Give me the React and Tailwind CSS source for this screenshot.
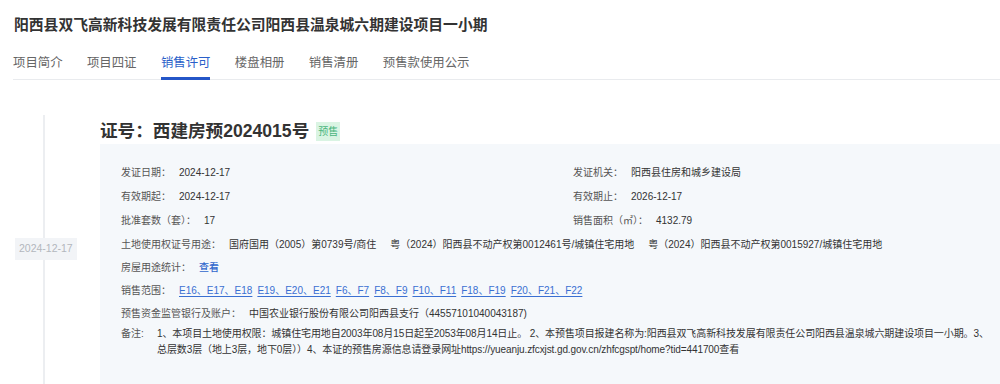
import React from "react";

const tabs = ["项目简介", "项目四证", "销售许可", "楼盘相册", "销售清册", "预售款使用公示"];
const links = ["E16、E17、E18", "E19、E20、E21", "F6、F7", "F8、F9", "F10、F11", "F18、F19", "F20、F21、F22"];

function Field({ label, children, className = "" }) {
  return (
    <div className={"flex items-center leading-[16px] whitespace-nowrap " + className}>
      <span className="text-[#555] mr-[8px]">{label}</span>
      <span className="text-[#333]">{children}</span>
    </div>
  );
}

export default function App() {
  return (
    <div className="w-[1000px] bg-white font-['Liberation_Sans','Noto_Sans_CJK_SC',sans-serif]">
      <div className="pl-[14px] pt-[13px] text-[14.8px] leading-[24px] font-bold text-[#333]">
        阳西县双飞高新科技发展有限责任公司阳西县温泉城六期建设项目一小期
      </div>
      <div className="mt-[16px] ml-[13px] flex gap-[24.4px] border-b border-[#e9ebee]">
        {tabs.map((t, i) => (
          <div
            key={t}
            className={
              "text-[12.4px] leading-[20px] pb-[4px] border-b-[3px] -mb-[1px] " +
              (i === 2 ? "text-[#2a5fc9] border-[#2456c8]" : "text-[#666] border-transparent")
            }
          >
            {t}
          </div>
        ))}
      </div>
      <div className="flex">
        <div className="relative w-[100px] shrink-0 pt-[35px]">
          <div className="ml-[43px] w-[2px] h-full bg-[#eceef1]" />
          <div className="absolute left-[15px] top-[158px] h-[22px] px-[4px] flex items-center bg-[#f2f4f7] text-[10.5px] text-[#b3b7bd]">
            2024-12-17
          </div>
        </div>
        <div className="flex-1 pt-[38px]">
          <div className="h-[26px] flex items-center gap-[7px]">
            <span className="text-[17.6px] font-bold text-[#333] leading-[24px]">证号：西建房预2024015号</span>
            <span className="h-[19px] px-[2px] flex items-center bg-[#daf4e3] text-[10px] text-[#4cb67d]">预售</span>
          </div>
          <div className="bg-[#f5f8fb] pl-[21px] pr-[10px] pt-[21px] pb-[40px] text-[10px]">
            <div className="grid grid-cols-[452px_1fr]">
              <Field label="发证日期：" className="mb-[8px]">2024-12-17</Field>
              <Field label="发证机关：" className="mb-[8px]">阳西县住房和城乡建设局</Field>
              <Field label="有效期起：" className="mb-[8px]">2024-12-17</Field>
              <Field label="有效期止：" className="mb-[8px]">2026-12-17</Field>
              <Field label="批准套数（套）：" className="mb-[8px]">17</Field>
              <Field label="销售面积（㎡）：" className="mb-[8px]">4132.79</Field>
            </div>
            <Field label="土地使用权证号用途：" className="mb-[7px]">
              <span className="mr-[14px]">国府国用（2005）第0739号/商住</span>
              <span className="mr-[14px]">粤（2024）阳西县不动产权第0012461号/城镇住宅用地</span>
              <span>粤（2024）阳西县不动产权第0015927/城镇住宅用地</span>
            </Field>
            <Field label="房屋用途统计：" className="mb-[7px]">
              <span className="text-[#2f66cc] font-medium">查看</span>
            </Field>
            <Field label="销售范围：" className="mb-[7px]">
              <span className="flex gap-[5px]">
                {links.map((l) => (
                  <span key={l} className="text-[#3a6fd2] underline underline-offset-2">{l}</span>
                ))}
              </span>
            </Field>
            <Field label="预售资金监管银行及账户：" className="mb-[4px]">
              中国农业银行股份有限公司阳西县支行（44557101040043187)
            </Field>
            <div className="flex leading-[16px] text-[#333]">
              <span className="text-[#555] w-[36px] shrink-0">备注:</span>
              <div className="flex-1 tracking-[-0.1px]">
                1、本项目土地使用权限：城镇住宅用地自2003年08月15日起至2053年08月14日止。 2、本预售项目报建名称为:阳西县双飞高新科技发展有限责任公司阳西县温泉城六期建设项目一小期。3、
                <br />
                总层数3层（地上3层，地下0层））4、本证的预售房源信息请登录网址https://yueanju.zfcxjst.gd.gov.cn/zhfcgspt/home?tid=441700查看
              </div>
            </div>
          </div>
        </div>
      </div>
    </div>
  );
}
